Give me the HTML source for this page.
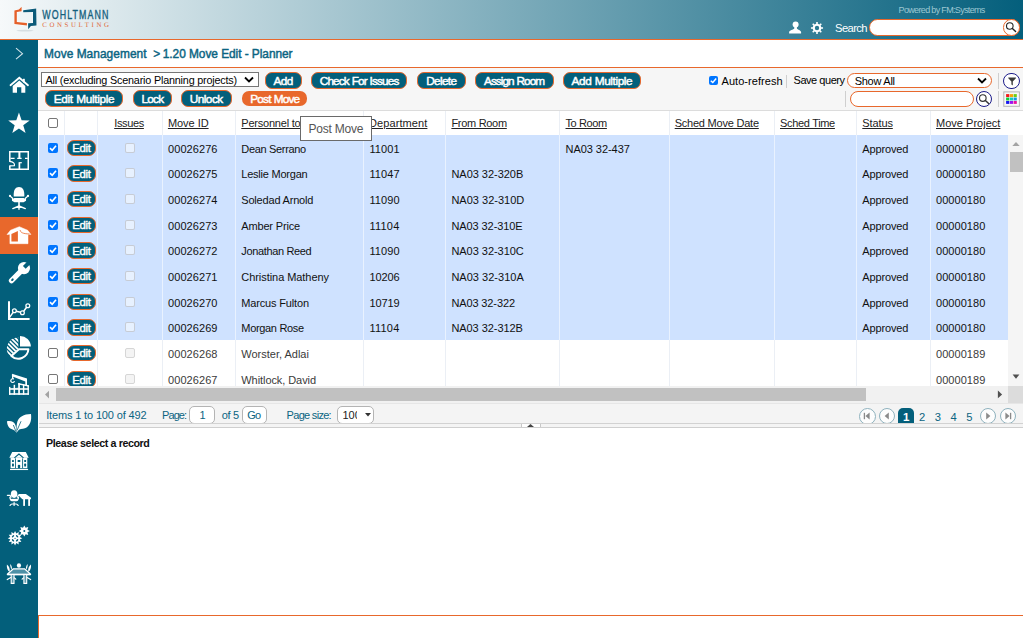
<!DOCTYPE html>
<html lang="en">
<head>
<meta charset="utf-8">
<title>1.20 Move Edit - Planner</title>
<style>
*{box-sizing:border-box;}
html,body{margin:0;padding:0;}
body{width:1023px;height:638px;overflow:hidden;background:#fff;font-family:"Liberation Sans",sans-serif;font-size:11px;color:#222;position:relative;}
div,span{position:absolute;}
.t{white-space:nowrap;line-height:14px;height:14px;}
#hdr{left:0;top:0;width:1023px;height:39px;background:linear-gradient(90deg,#f6f9fa 0%,#045f7c 100%);}
#hdrline{left:0;top:38.7px;width:1023px;height:1.4px;background:#e8682c;}
#side{left:0;top:40px;width:38px;height:598px;background:#035f7b;}
#side .act{left:0;top:177px;width:38px;height:37px;background:#e8682c;}
#side svg{position:absolute;left:0;}
#crumb{left:44px;top:47px;font-weight:bold;font-size:12.4px;color:#0b6482;white-space:pre;letter-spacing:-0.4px;}
#crumbline{left:38px;top:67.1px;width:985px;height:1.1px;background:#e8682c;}
#tool{left:38px;top:68px;width:985px;height:42.7px;background:#f6f6f6;border-bottom:1px solid #dcdcdc;}
.btn{height:16.5px;border:1.5px solid #e8682c;border-radius:7px;background:#035f7b;color:#fff;font-weight:bold;font-size:11px;line-height:13px;text-align:center;white-space:nowrap;overflow:hidden;}
.btn.or{background:#e8682c;}
.cb{width:10px;height:10px;border:1px solid #767676;border-radius:2px;background:#fff;}
.cb.on{border:none;background:#0075ff;}
.cb.dis{border-color:rgba(150,150,150,.4);background:rgba(255,255,255,.5);}
.cb.dis2{border-color:#d6d6d6;background:#f4f4f4;}
.cb.on svg{position:absolute;left:0;top:0;}
.row{left:41px;width:967px;height:25.65px;}
.row.sel{background:#cfe2ff;}
.vl{width:1px;background:#ebeff5;}
.hd{text-decoration:underline;color:#222;}
.pill{border:1px solid #e8682c;border-radius:8px;background:#fff;}
.sep{width:1px;background:#cfcfcf;}
</style>
</head>
<body>
<div id="hdr"></div><div id="hdrline"></div>
<svg style="position:absolute;left:0;top:0" width="120" height="39" viewBox="0 0 120 39"><ellipse cx="25" cy="30.6" rx="8.6" ry="0.8" fill="#cfd8dc" opacity="0.8"/><path d="M21.6 6.8 L18.9 9.5 L14.4 10.5 L14.4 24.1 L26.9 25.5 L26.9 23 L16.8 22 L16.8 12.1 L21.6 11.3 Z" fill="#e4602a" stroke="#fff" stroke-width="0.8" stroke-linejoin="round" paint-order="stroke"/><path d="M23.2 10.3 L36.2 8.4 L36.5 25.4 L30.9 26 L28.2 29.2 L28.1 23.3 L33 23 L33 11.9 L23.2 12.2 Z" fill="#0d5b79" stroke="#fff" stroke-width="0.8" stroke-linejoin="round" paint-order="stroke"/><text transform="translate(42.2 19.45) scale(0.72 1)" font-family="Liberation Sans, sans-serif" font-size="12.3" fill="#14607d" stroke="#14607d" stroke-width="0.35" textLength="92" lengthAdjust="spacing">WOHLTMANN</text><text x="42.2" y="26.75" font-family="Liberation Serif, serif" font-size="6.9" text-rendering="geometricPrecision" fill="#e0693a" textLength="66.8" lengthAdjust="spacing">CONSULTING</text></svg>
<svg style="position:absolute;left:780px;top:14px" width="60" height="25" viewBox="780 14 60 25"><circle cx="795.6" cy="24.4" r="3" fill="#fff"/><path d="M794.3 26.5 H796.9 V28.6 C797.6 30 801 30.2 801.1 32.2 V33.5 H789.1 V32.2 C789.2 30.2 793.6 30 794.3 28.6Z" fill="#fff"/><path d="M823.05 27.19 L823.05 28.81 L821.33 28.78 L820.61 30.51 L821.85 31.70 L820.70 32.85 L819.51 31.61 L817.78 32.33 L817.81 34.05 L816.19 34.05 L816.22 32.33 L814.49 31.61 L813.30 32.85 L812.15 31.70 L813.39 30.51 L812.67 28.78 L810.95 28.81 L810.95 27.19 L812.67 27.22 L813.39 25.49 L812.15 24.30 L813.30 23.15 L814.49 24.39 L816.22 23.67 L816.19 21.95 L817.81 21.95 L817.78 23.67 L819.51 24.39 L820.70 23.15 L821.85 24.30 L820.61 25.49 L821.33 27.22Z" fill="#fff"/><circle cx="817" cy="28" r="2.2" fill="#2b7a92"/></svg>
<div id="side"><div class="act"></div><svg style="position:absolute;left:0;top:0" width="38" height="598" viewBox="0 40 38 598"><path d="M16 48.2 L22.5 53.7 L16 59.2" stroke="#d3e4ea" stroke-width="1.1" fill="none"/><path d="M10.5 85.2 L19.3 77.7 L28 85.2" stroke="#fff" stroke-width="1.8" fill="none" stroke-linecap="round" stroke-linejoin="miter"/><rect x="23" y="78.8" width="1.8" height="3.6" fill="#fff"/><path d="M12.7 86 L19.3 80.4 L25.3 86 V92.8 H21.3 V87.2 H17 V92.8 H12.7Z" fill="#fff"/><polygon points="18.95,112.60 21.60,120.26 29.70,120.41 23.23,125.29 25.59,133.04 18.95,128.40 12.31,133.04 14.67,125.29 8.20,120.41 16.30,120.26" fill="#fff"/><path d="M9.8 161.7 V151.75 H28.25 V169.15 H9.8 V165.8" fill="none" stroke="#fff" stroke-width="1.5"/><path d="M9.4 161.4 C13.6 161.8 14.9 163.6 14.4 165.7 L9.4 165.9" fill="none" stroke="#fff" stroke-width="1.2"/><path d="M19.4 151.7 V158.8" stroke="#fff" stroke-width="2" fill="none"/><path d="M10.5 158.4 H14.6 M17.2 158.4 H21.6 M25 158.4 H27.8" stroke="#fff" stroke-width="1.4" fill="none"/><path d="M19.4 162.2 V169.2" stroke="#fff" stroke-width="1.7" fill="none"/><path d="M19.4 162.7 H21.8" stroke="#fff" stroke-width="1.2" fill="none"/><path d="M13.7 196.6 C13.3 189.6 15.5 187 19 187 C22.5 187 24.7 189.6 24.3 196.6 Z" fill="#fff"/><path d="M10 196 L12.6 198.2 V200.6 M28 196 L25.4 198.2 V200.6" stroke="#fff" stroke-width="1.3" fill="none" stroke-linecap="round"/><circle cx="10" cy="195.9" r="1.1" fill="#fff"/><circle cx="28" cy="195.9" r="1.1" fill="#fff"/><rect x="12.9" y="198" width="12.2" height="4.2" rx="1.6" fill="#fff"/><rect x="18.2" y="202" width="1.6" height="4.4" fill="#fff"/><path d="M19 206 L12.8 208.6 M19 206 L25.3 208.6 M19 206 V209.2" stroke="#fff" stroke-width="1.4" fill="none" stroke-linecap="round"/><path d="M7 234.6 L10.5 230.2 L19.3 226.7 L27.7 230.3 L30.9 234.4 L28 234.6 V243.7 H9.9 V234.3Z" fill="#fff" stroke="#fff" stroke-width="0.5" stroke-linejoin="round"/><path d="M11.4 234 L17.9 231 V241.6 H11.4Z" fill="#e8682c"/><path d="M20.1 230 C20.6 232.6 22.6 233.7 29.6 234" fill="none" stroke="#e8682c" stroke-width="0.8"/><path d="M11.5 280.7 L21.5 270.7" stroke="#fff" stroke-width="5.3" stroke-linecap="round"/><circle cx="24" cy="268.1" r="6.1" fill="#fff"/><path d="M22.9 265.9 L28.6 260.2 L31.4 263 L25.7 268.7 Z" fill="#035f7b"/><ellipse cx="12.4" cy="279.7" rx="1.5" ry="1" transform="rotate(-45 12.4 279.7)" fill="#035f7b"/><path d="M9 301.2 V319 H29.6" stroke="#fff" stroke-width="2" fill="none"/><path d="M9.4 317.6 L13.1 312.4 M16.2 311.3 L20.6 312.3 M23.7 311.2 L26.6 307.3" stroke="#fff" stroke-width="1.5" fill="none"/><circle cx="14.4" cy="310.8" r="1.9" fill="none" stroke="#fff" stroke-width="1.3"/><circle cx="22.4" cy="312.7" r="1.9" fill="none" stroke="#fff" stroke-width="1.3"/><circle cx="27.8" cy="305.8" r="1.9" fill="none" stroke="#fff" stroke-width="1.3"/><defs><clipPath id="pieL"><path d="M18.3 348.4 L18.3 337.5 A11 11 0 0 0 10.3 356.4 Z"/></clipPath></defs><g clip-path="url(#pieL)" stroke="#fff" stroke-width="1.75"><path d="M-18.5 330 L21.5 370"/><path d="M-14.2 330 L25.8 370"/><path d="M-9.9 330 L30.1 370"/><path d="M-5.6 330 L34.4 370"/><path d="M-1.3 330 L38.7 370"/><path d="M3 330 L43 370"/><path d="M7.3 330 L47.3 370"/><path d="M11.6 330 L51.6 370"/><path d="M15.9 330 L55.9 370"/></g><path d="M18.9 349.3 H28.4 A10.1 10.1 0 0 1 11.4 355.9 Z" fill="none" stroke="#fff" stroke-width="2" stroke-linejoin="round"/><path d="M20 346.6 V336 A10.8 10.8 0 0 1 30.9 346.6 Z" fill="#fff"/><rect x="9" y="388.2" width="19.9" height="1.6" fill="#fff"/><rect x="9" y="393.2" width="19.9" height="1.6" fill="#fff"/><rect x="9" y="386.9" width="1.4" height="7.8" fill="#fff"/><rect x="13.6" y="384.8" width="1.5" height="9.9" fill="#fff"/><rect x="18.2" y="383.2" width="1.7" height="11.5" fill="#fff"/><rect x="22.9" y="384.4" width="1.4" height="10.3" fill="#fff"/><rect x="27.5" y="385.4" width="1.4" height="9.3" fill="#fff"/><path d="M18.2 383.1 L28.9 385.3 V386.7 L18.2 384.6Z" fill="#fff"/><path d="M9 389 L18.5 387.6 V389Z" fill="#fff" opacity="0.55"/><path d="M12 373.7 L27 378.5 V385.3 L25.3 385 V381.4 L12.6 376.5Z" fill="#fff"/><path d="M12.5 374.4 L12.8 379" stroke="#fff" stroke-width="1.3" fill="none"/><path d="M13.4 378.8 C10.4 378.4 9.8 382.2 12.6 382.5 C13.6 382.5 14.1 382 14.3 381.5" stroke="#fff" stroke-width="1.2" fill="none" stroke-linecap="round"/><path d="M16.5 432.7 C16.5 428 16.5 424.2 17.4 421.6 C18.8 417.2 23.6 414.2 31 414.1 C31.7 420 30.6 424.6 27 427.2 C24.4 429 21.4 428.8 19.3 429.4 C18.2 430.2 17.4 431.6 16.5 432.7Z" fill="#fff"/><path d="M16.4 432.6 C15.2 430.8 14 429.8 12.6 429.4 C9.3 428.7 7.1 425.7 7 421.3 C11.2 420.5 14.3 422 15.5 425.2 C16.1 427 16.3 429.8 16.4 432.6Z" fill="#fff"/><path d="M16 431.4 L13.5 425.4 M17.1 430.2 L20.9 421.6" stroke="#035f7b" stroke-width="0.8" fill="none" stroke-linecap="round"/><path d="M9.3 457.7 L12.2 452 H25.8 L28.7 457.7Z" fill="#fff"/><rect x="10.6" y="457.6" width="16.7" height="10.6" fill="#fff"/><rect x="10" y="468.9" width="18.1" height="1.15" fill="#fff"/><path d="M14.4 457.9 L18.95 454 L23.5 457.9" fill="none" stroke="#035f7b" stroke-width="1.1"/><rect x="12" y="459.9" width="1.9" height="2.1" rx="0.5" fill="#035f7b"/><rect x="12" y="463.6" width="1.9" height="2.9" rx="0.6" fill="#035f7b"/><rect x="24.2" y="459.9" width="1.9" height="2.1" rx="0.5" fill="#035f7b"/><rect x="24.2" y="463.6" width="1.9" height="2.9" rx="0.6" fill="#035f7b"/><rect x="15.1" y="458.4" width="0.85" height="9.8" rx="0" fill="#035f7b"/><rect x="22.2" y="458.4" width="0.85" height="9.8" rx="0" fill="#035f7b"/><rect x="17.6" y="459.9" width="2.7" height="2.1" rx="0.5" fill="#035f7b"/><rect x="17.8" y="464.7" width="2.4" height="3.6" rx="1" fill="#035f7b"/><ellipse cx="14.1" cy="494.1" rx="3.3" ry="3.8" fill="#fff"/><path d="M9.9 497.4 C10.2 499.6 10.8 500.6 12 500.7 H16.4 C17.6 500.6 18.2 499.6 18.5 497.4" fill="none" stroke="#fff" stroke-width="1.3" stroke-linecap="round"/><rect x="11" y="498.8" width="6.4" height="1.9" fill="#fff"/><path d="M7.4 495.3 H10 L11 497.2 M20.6 495.3 H18.4 L17.4 497.2" stroke="#fff" stroke-width="1.3" fill="none" stroke-linecap="round"/><path d="M10 505.4 C11 503.2 17.2 503.2 18.2 505.4 M14.1 502.6 V505.4" stroke="#fff" stroke-width="1.2" fill="none" stroke-linecap="round"/><path d="M18.6 494 H25.9 L31 497.8 V499.2 H22.4 L18.6 495.6Z" fill="#fff"/><rect x="23.2" y="499" width="1.8" height="6.9" fill="#fff"/><rect x="28.2" y="499" width="1.8" height="6.9" fill="#fff"/><polygon points="15.05,545.60 13.78,543.03 11.40,544.62 11.59,541.76 8.73,541.95 10.32,539.57 7.75,538.30 10.32,537.03 8.73,534.65 11.59,534.84 11.40,531.98 13.78,533.57 15.05,531.00 16.32,533.57 18.70,531.98 18.51,534.84 21.37,534.65 19.78,537.03 22.35,538.30 19.78,539.57 21.37,541.95 18.51,541.76 18.70,544.62 16.32,543.03" fill="#fff"/><ellipse cx="17.10" cy="540.35" rx="1.5" ry="0.75" transform="rotate(135 17.10 540.35)" fill="#035f7b"/><ellipse cx="13.00" cy="540.35" rx="1.5" ry="0.75" transform="rotate(225 13.00 540.35)" fill="#035f7b"/><ellipse cx="13.00" cy="536.25" rx="1.5" ry="0.75" transform="rotate(315 13.00 536.25)" fill="#035f7b"/><ellipse cx="17.10" cy="536.25" rx="1.5" ry="0.75" transform="rotate(405 17.10 536.25)" fill="#035f7b"/><circle cx="15.05" cy="538.3" r="0.6" fill="#035f7b"/><polygon points="24.30,536.60 23.00,534.14 20.34,534.96 21.16,532.30 18.70,531.00 21.16,529.70 20.34,527.04 23.00,527.86 24.30,525.40 25.60,527.86 28.26,527.04 27.44,529.70 29.90,531.00 27.44,532.30 28.26,534.96 25.60,534.14" fill="#fff"/><circle cx="24.3" cy="531" r="1" fill="#035f7b"/><ellipse cx="18.95" cy="565.5" rx="2.1" ry="2.35" fill="#fff"/><path d="M13.4 568.8 H24.5 L30.6 574.3 H7.3Z" fill="#4d90a6" stroke="#fff" stroke-width="1.2" stroke-linejoin="round"/><path d="M7.3 574.6 H30.6" stroke="#fff" stroke-width="1.5"/><g><path d="M6.9 564.4 C6.6 567.8 7.6 570.4 9.6 571.8 C10.2 569 9.2 566.2 6.9 564.4Z" fill="#fff"/><path d="M10.2 564 C10.2 566.4 10.6 568.2 11.7 569.6 C12.3 567.6 11.8 565.6 10.2 564Z" fill="#fff"/><path d="M11.2 575 V583.4 H14 V575" fill="#5a99ad" stroke="#fff" stroke-width="1.1"/><path d="M7.3 579.6 L10.8 577.6 M14.4 577.8 L15.8 579.2" stroke="#fff" stroke-width="1.2" fill="none" stroke-linecap="round"/></g><g transform="translate(37.9 0) scale(-1 1)"><path d="M6.9 564.4 C6.6 567.8 7.6 570.4 9.6 571.8 C10.2 569 9.2 566.2 6.9 564.4Z" fill="#fff"/><path d="M10.2 564 C10.2 566.4 10.6 568.2 11.7 569.6 C12.3 567.6 11.8 565.6 10.2 564Z" fill="#fff"/><path d="M11.2 575 V583.4 H14 V575" fill="#5a99ad" stroke="#fff" stroke-width="1.1"/><path d="M7.3 579.6 L10.8 577.6 M14.4 577.8 L15.8 579.2" stroke="#fff" stroke-width="1.2" fill="none" stroke-linecap="round"/></g></svg></div>
<div id="crumbline"></div>
<span id="t1" class="t " style="left:44px;top:47.2px;letter-spacing:0.054px;color:#0b6482;font-size:11.9px;-webkit-text-stroke:0.45px #0b6482;">Move Management</span>
<span id="t2" class="t " style="left:153.2px;top:47.2px;letter-spacing:-1.453px;color:#0b6482;font-size:11.9px;-webkit-text-stroke:0.45px #0b6482;">&gt;</span>
<span id="t3" class="t " style="left:162.8px;top:47.2px;letter-spacing:-0.049px;color:#0b6482;font-size:11.9px;-webkit-text-stroke:0.45px #0b6482;">1.20 Move Edit - Planner</span>
<div id="tool"></div>
<div class="btn" style="left:265.2px;top:72.1px;width:36.8px;"></div>
<span id="t4" class="t " style="left:273.4px;top:73.8px;word-spacing:0.5px;letter-spacing:-0.533px;color:#fff;font-size:11.8px;-webkit-text-stroke:0.45px #fff;">Add</span>
<div class="btn" style="left:310.8px;top:72.1px;width:96.2px;"></div>
<span id="t5" class="t " style="left:319.8px;top:73.8px;word-spacing:0.5px;letter-spacing:-0.887px;color:#fff;font-size:11.8px;-webkit-text-stroke:0.45px #fff;">Check For Issues</span>
<div class="btn" style="left:417px;top:72.1px;width:49px;"></div>
<span id="t6" class="t " style="left:426.2px;top:73.8px;word-spacing:0.5px;letter-spacing:-0.668px;color:#fff;font-size:11.8px;-webkit-text-stroke:0.45px #fff;">Delete</span>
<div class="btn" style="left:475px;top:72.1px;width:78.5px;"></div>
<span id="t7" class="t " style="left:484px;top:73.8px;word-spacing:0.5px;letter-spacing:-0.951px;color:#fff;font-size:11.8px;-webkit-text-stroke:0.45px #fff;">Assign Room</span>
<div class="btn" style="left:563px;top:72.1px;width:78.2px;"></div>
<span id="t8" class="t " style="left:571.6px;top:73.8px;word-spacing:0.5px;letter-spacing:-0.402px;color:#fff;font-size:11.8px;-webkit-text-stroke:0.45px #fff;">Add Multiple</span>
<div class="btn" style="left:45px;top:90.1px;width:77.6px;"></div>
<span id="t9" class="t " style="left:53.8px;top:92.3px;word-spacing:0.5px;letter-spacing:-0.328px;color:#fff;font-size:11.8px;-webkit-text-stroke:0.45px #fff;">Edit Multiple</span>
<div class="btn" style="left:133.2px;top:90.1px;width:38.6px;"></div>
<span id="t10" class="t " style="left:141.4px;top:92.3px;word-spacing:0.5px;letter-spacing:-0.755px;color:#fff;font-size:11.8px;-webkit-text-stroke:0.45px #fff;">Lock</span>
<div class="btn" style="left:181px;top:90.1px;width:50.6px;"></div>
<span id="t11" class="t " style="left:189.7px;top:92.3px;word-spacing:0.5px;letter-spacing:-0.510px;color:#fff;font-size:11.8px;-webkit-text-stroke:0.45px #fff;">Unlock</span>
<div class="btn or" style="left:242px;top:91.1px;width:65.2px;height:14.8px;border:none;border-radius:7px;"></div>
<span id="t12" class="t " style="left:250.2px;top:92.3px;word-spacing:0.5px;letter-spacing:-0.782px;color:#fff;font-size:11.8px;-webkit-text-stroke:0.45px #fff;">Post Move</span>
<div style="left:41px;top:72.2px;width:217.8px;height:14.7px;border:1px solid #767676;background:#fff;"></div>
<span id="t13" class="t " style="left:45.6px;top:73.3px;letter-spacing:-0.187px;color:#000;font-size:10.8px;">All (excluding Scenario Planning projects)</span>
<svg style="position:absolute;left:244px;top:76px" width="10" height="8" viewBox="0 0 10 8"><path d="M1 1.5 L5 5.5 L9 1.5" fill="none" stroke="#000" stroke-width="1.8"/></svg>
<div class="cb on" style="left:709px;top:76px;width:9px;height:9px;"><svg width="9" height="9" viewBox="0 0 10 10"><path d="M2 5.2 L4.2 7.3 L8 2.8" fill="none" stroke="#fff" stroke-width="1.6"/></svg></div>
<span id="t14" class="t " style="left:721.5px;top:73.5px;letter-spacing:0.056px;color:#000;">Auto-refresh</span>
<div class="sep" style="left:786px;top:75px;height:13px;"></div>
<span id="t15" class="t " style="left:793.5px;top:73px;letter-spacing:-0.456px;color:#000;">Save query</span>
<div class="pill" style="left:847px;top:73px;width:145px;height:14.9px;"></div>
<span id="t16" class="t " style="left:854.7px;top:73.5px;letter-spacing:-0.263px;color:#000;">Show All</span>
<svg style="position:absolute;left:977px;top:76.6px" width="10" height="8" viewBox="0 0 10 8"><path d="M1 1.5 L5 5.5 L9 1.5" fill="none" stroke="#000" stroke-width="1.8"/></svg>
<div class="sep" style="left:845px;top:91px;height:16px;"></div>
<div class="pill" style="left:849.5px;top:91px;width:124.5px;height:15.5px;"></div>
<div class="sep" style="left:998px;top:73px;height:15.5px;"></div>
<div class="sep" style="left:998px;top:91.4px;height:15.2px;"></div>
<div style="left:38px;top:110.5px;width:985px;height:24.5px;background:#fff;"></div>
<div style="left:39px;top:135px;width:969px;height:205px;background:#cfe2ff;"></div>
<div class="vl" style="left:63.6px;top:111px;height:24px;"></div>
<div class="vl" style="left:63.6px;top:135px;height:251.5px;background:rgba(255,255,255,.55);"></div>
<div class="vl" style="left:63.6px;top:340.4px;height:46px;background:#ebeff5;"></div>
<div class="vl" style="left:96.6px;top:111px;height:24px;"></div>
<div class="vl" style="left:96.6px;top:135px;height:251.5px;background:rgba(255,255,255,.55);"></div>
<div class="vl" style="left:96.6px;top:340.4px;height:46px;background:#ebeff5;"></div>
<div class="vl" style="left:161.6px;top:111px;height:24px;"></div>
<div class="vl" style="left:161.6px;top:135px;height:251.5px;background:rgba(255,255,255,.55);"></div>
<div class="vl" style="left:161.6px;top:340.4px;height:46px;background:#ebeff5;"></div>
<div class="vl" style="left:234.6px;top:111px;height:24px;"></div>
<div class="vl" style="left:234.6px;top:135px;height:251.5px;background:rgba(255,255,255,.55);"></div>
<div class="vl" style="left:234.6px;top:340.4px;height:46px;background:#ebeff5;"></div>
<div class="vl" style="left:362.5px;top:111px;height:24px;"></div>
<div class="vl" style="left:362.5px;top:135px;height:251.5px;background:rgba(255,255,255,.55);"></div>
<div class="vl" style="left:362.5px;top:340.4px;height:46px;background:#ebeff5;"></div>
<div class="vl" style="left:445px;top:111px;height:24px;"></div>
<div class="vl" style="left:445px;top:135px;height:251.5px;background:rgba(255,255,255,.55);"></div>
<div class="vl" style="left:445px;top:340.4px;height:46px;background:#ebeff5;"></div>
<div class="vl" style="left:558.9px;top:111px;height:24px;"></div>
<div class="vl" style="left:558.9px;top:135px;height:251.5px;background:rgba(255,255,255,.55);"></div>
<div class="vl" style="left:558.9px;top:340.4px;height:46px;background:#ebeff5;"></div>
<div class="vl" style="left:668.7px;top:111px;height:24px;"></div>
<div class="vl" style="left:668.7px;top:135px;height:251.5px;background:rgba(255,255,255,.55);"></div>
<div class="vl" style="left:668.7px;top:340.4px;height:46px;background:#ebeff5;"></div>
<div class="vl" style="left:774px;top:111px;height:24px;"></div>
<div class="vl" style="left:774px;top:135px;height:251.5px;background:rgba(255,255,255,.55);"></div>
<div class="vl" style="left:774px;top:340.4px;height:46px;background:#ebeff5;"></div>
<div class="vl" style="left:856px;top:111px;height:24px;"></div>
<div class="vl" style="left:856px;top:135px;height:251.5px;background:rgba(255,255,255,.55);"></div>
<div class="vl" style="left:856px;top:340.4px;height:46px;background:#ebeff5;"></div>
<div class="vl" style="left:930px;top:111px;height:24px;"></div>
<div class="vl" style="left:930px;top:135px;height:251.5px;background:rgba(255,255,255,.55);"></div>
<div class="vl" style="left:930px;top:340.4px;height:46px;background:#ebeff5;"></div>
<div class="cb" style="left:48px;top:117.5px;"></div>
<span id="t17" class="t hd" style="left:114.2px;top:116.2px;letter-spacing:-0.349px;">Issues</span>
<span id="t18" class="t hd" style="left:167.9px;top:116.2px;letter-spacing:-0.038px;">Move ID</span>
<span id="t19" class="t hd" style="left:241.3px;top:116.2px;letter-spacing:-0.219px;">Personnel to Move</span>
<span id="t20" class="t hd" style="left:369px;top:116.2px;letter-spacing:0.092px;">Department</span>
<span id="t21" class="t hd" style="left:451.4px;top:116.2px;letter-spacing:-0.296px;">From Room</span>
<span id="t22" class="t hd" style="left:565.5px;top:116.2px;letter-spacing:-0.376px;">To Room</span>
<span id="t23" class="t hd" style="left:674.7px;top:116.2px;letter-spacing:-0.223px;">Sched Move Date</span>
<span id="t24" class="t hd" style="left:780px;top:116.2px;letter-spacing:-0.319px;">Sched Time</span>
<span id="t25" class="t hd" style="left:862.3px;top:116.2px;letter-spacing:-0.115px;">Status</span>
<span id="t26" class="t hd" style="left:936px;top:116.2px;letter-spacing:0.016px;">Move Project</span>
<div style="left:0;top:135px;width:1008px;height:252px;overflow:hidden;">
<div class="cb on" style="left:48px;top:7.6px;"><svg width="10" height="10" viewBox="0 0 10 10"><path d="M2 5.2 L4.2 7.3 L8 2.8" fill="none" stroke="#fff" stroke-width="1.6"/></svg></div>
<div class="btn" style="left:67px;top:4.6px;width:28.5px;height:16.5px;"></div>
<span id="t27" class="t " style="left:72.2px;top:6.1px;letter-spacing:-0.260px;color:#fff;font-size:11.4px;-webkit-text-stroke:0.4px #fff;">Edit</span>
<div class="cb dis" style="left:125px;top:7.6px;"></div>
<span id="t28" class="t " style="left:168.1px;top:6.6px;letter-spacing:0.056px;color:#111;">00026276</span>
<span id="t29" class="t " style="left:241.3px;top:6.6px;letter-spacing:-0.325px;color:#111;">Dean Serrano</span>
<span id="t30" class="t " style="left:369.4px;top:6.6px;letter-spacing:0.084px;color:#111;">11001</span>
<span id="t31" class="t " style="left:565.5px;top:6.6px;letter-spacing:-0.048px;color:#111;">NA03 32-437</span>
<span id="t32" class="t " style="left:862.3px;top:6.6px;letter-spacing:-0.137px;color:#111;">Approved</span>
<span id="t33" class="t " style="left:936px;top:6.6px;letter-spacing:0.056px;color:#111;">00000180</span>
<div class="cb on" style="left:48px;top:33.25px;"><svg width="10" height="10" viewBox="0 0 10 10"><path d="M2 5.2 L4.2 7.3 L8 2.8" fill="none" stroke="#fff" stroke-width="1.6"/></svg></div>
<div class="btn" style="left:67px;top:30.25px;width:28.5px;height:16.5px;"></div>
<span id="t34" class="t " style="left:72.2px;top:31.75px;letter-spacing:-0.260px;color:#fff;font-size:11.4px;-webkit-text-stroke:0.4px #fff;">Edit</span>
<div class="cb dis" style="left:125px;top:33.25px;"></div>
<span id="t35" class="t " style="left:168.1px;top:32.25px;letter-spacing:0.056px;color:#111;">00026275</span>
<span id="t36" class="t " style="left:241.3px;top:32.25px;letter-spacing:-0.230px;color:#111;">Leslie Morgan</span>
<span id="t37" class="t " style="left:369.4px;top:32.25px;letter-spacing:0.084px;color:#111;">11047</span>
<span id="t38" class="t " style="left:451.4px;top:32.25px;letter-spacing:-0.023px;color:#111;">NA03 32-320B</span>
<span id="t39" class="t " style="left:862.3px;top:32.25px;letter-spacing:-0.137px;color:#111;">Approved</span>
<span id="t40" class="t " style="left:936px;top:32.25px;letter-spacing:0.056px;color:#111;">00000180</span>
<div class="cb on" style="left:48px;top:58.9px;"><svg width="10" height="10" viewBox="0 0 10 10"><path d="M2 5.2 L4.2 7.3 L8 2.8" fill="none" stroke="#fff" stroke-width="1.6"/></svg></div>
<div class="btn" style="left:67px;top:55.9px;width:28.5px;height:16.5px;"></div>
<span id="t41" class="t " style="left:72.2px;top:57.4px;letter-spacing:-0.260px;color:#fff;font-size:11.4px;-webkit-text-stroke:0.4px #fff;">Edit</span>
<div class="cb dis" style="left:125px;top:58.9px;"></div>
<span id="t42" class="t " style="left:168.1px;top:57.9px;letter-spacing:0.056px;color:#111;">00026274</span>
<span id="t43" class="t " style="left:241.3px;top:57.9px;letter-spacing:-0.195px;color:#111;">Soledad Arnold</span>
<span id="t44" class="t " style="left:369.4px;top:57.9px;letter-spacing:0.084px;color:#111;">11090</span>
<span id="t45" class="t " style="left:451.4px;top:57.9px;letter-spacing:0.010px;color:#111;">NA03 32-310D</span>
<span id="t46" class="t " style="left:862.3px;top:57.9px;letter-spacing:-0.137px;color:#111;">Approved</span>
<span id="t47" class="t " style="left:936px;top:57.9px;letter-spacing:0.056px;color:#111;">00000180</span>
<div class="cb on" style="left:48px;top:84.55px;"><svg width="10" height="10" viewBox="0 0 10 10"><path d="M2 5.2 L4.2 7.3 L8 2.8" fill="none" stroke="#fff" stroke-width="1.6"/></svg></div>
<div class="btn" style="left:67px;top:81.55px;width:28.5px;height:16.5px;"></div>
<span id="t48" class="t " style="left:72.2px;top:83.05px;letter-spacing:-0.260px;color:#fff;font-size:11.4px;-webkit-text-stroke:0.4px #fff;">Edit</span>
<div class="cb dis" style="left:125px;top:84.55px;"></div>
<span id="t49" class="t " style="left:168.1px;top:83.55px;letter-spacing:0.056px;color:#111;">00026273</span>
<span id="t50" class="t " style="left:241.3px;top:83.55px;letter-spacing:-0.166px;color:#111;">Amber Price</span>
<span id="t51" class="t " style="left:369.4px;top:83.55px;letter-spacing:0.246px;color:#111;">11104</span>
<span id="t52" class="t " style="left:451.4px;top:83.55px;letter-spacing:-0.081px;color:#111;">NA03 32-310E</span>
<span id="t53" class="t " style="left:862.3px;top:83.55px;letter-spacing:-0.137px;color:#111;">Approved</span>
<span id="t54" class="t " style="left:936px;top:83.55px;letter-spacing:0.056px;color:#111;">00000180</span>
<div class="cb on" style="left:48px;top:110.2px;"><svg width="10" height="10" viewBox="0 0 10 10"><path d="M2 5.2 L4.2 7.3 L8 2.8" fill="none" stroke="#fff" stroke-width="1.6"/></svg></div>
<div class="btn" style="left:67px;top:107.2px;width:28.5px;height:16.5px;"></div>
<span id="t55" class="t " style="left:72.2px;top:108.7px;letter-spacing:-0.260px;color:#fff;font-size:11.4px;-webkit-text-stroke:0.4px #fff;">Edit</span>
<div class="cb dis" style="left:125px;top:110.2px;"></div>
<span id="t56" class="t " style="left:168.1px;top:109.2px;letter-spacing:0.056px;color:#111;">00026272</span>
<span id="t57" class="t " style="left:241.3px;top:109.2px;letter-spacing:-0.348px;color:#111;">Jonathan Reed</span>
<span id="t58" class="t " style="left:369.4px;top:109.2px;letter-spacing:0.084px;color:#111;">11090</span>
<span id="t59" class="t " style="left:451.4px;top:109.2px;letter-spacing:-0.032px;color:#111;">NA03 32-310C</span>
<span id="t60" class="t " style="left:862.3px;top:109.2px;letter-spacing:-0.137px;color:#111;">Approved</span>
<span id="t61" class="t " style="left:936px;top:109.2px;letter-spacing:0.056px;color:#111;">00000180</span>
<div class="cb on" style="left:48px;top:135.85px;"><svg width="10" height="10" viewBox="0 0 10 10"><path d="M2 5.2 L4.2 7.3 L8 2.8" fill="none" stroke="#fff" stroke-width="1.6"/></svg></div>
<div class="btn" style="left:67px;top:132.85px;width:28.5px;height:16.5px;"></div>
<span id="t62" class="t " style="left:72.2px;top:134.35px;letter-spacing:-0.260px;color:#fff;font-size:11.4px;-webkit-text-stroke:0.4px #fff;">Edit</span>
<div class="cb dis" style="left:125px;top:135.85px;"></div>
<span id="t63" class="t " style="left:168.1px;top:134.85px;letter-spacing:0.056px;color:#111;">00026271</span>
<span id="t64" class="t " style="left:241.3px;top:134.85px;letter-spacing:-0.056px;color:#111;">Christina Matheny</span>
<span id="t65" class="t " style="left:369.4px;top:134.85px;letter-spacing:-0.079px;color:#111;">10206</span>
<span id="t66" class="t " style="left:451.4px;top:134.85px;letter-spacing:0.019px;color:#111;">NA03 32-310A</span>
<span id="t67" class="t " style="left:862.3px;top:134.85px;letter-spacing:-0.137px;color:#111;">Approved</span>
<span id="t68" class="t " style="left:936px;top:134.85px;letter-spacing:0.056px;color:#111;">00000180</span>
<div class="cb on" style="left:48px;top:161.5px;"><svg width="10" height="10" viewBox="0 0 10 10"><path d="M2 5.2 L4.2 7.3 L8 2.8" fill="none" stroke="#fff" stroke-width="1.6"/></svg></div>
<div class="btn" style="left:67px;top:158.5px;width:28.5px;height:16.5px;"></div>
<span id="t69" class="t " style="left:72.2px;top:160px;letter-spacing:-0.260px;color:#fff;font-size:11.4px;-webkit-text-stroke:0.4px #fff;">Edit</span>
<div class="cb dis" style="left:125px;top:161.5px;"></div>
<span id="t70" class="t " style="left:168.1px;top:160.5px;letter-spacing:0.056px;color:#111;">00026270</span>
<span id="t71" class="t " style="left:241.3px;top:160.5px;letter-spacing:-0.162px;color:#111;">Marcus Fulton</span>
<span id="t72" class="t " style="left:369.4px;top:160.5px;letter-spacing:-0.079px;color:#111;">10719</span>
<span id="t73" class="t " style="left:451.4px;top:160.5px;letter-spacing:-0.121px;color:#111;">NA03 32-322</span>
<span id="t74" class="t " style="left:862.3px;top:160.5px;letter-spacing:-0.137px;color:#111;">Approved</span>
<span id="t75" class="t " style="left:936px;top:160.5px;letter-spacing:0.056px;color:#111;">00000180</span>
<div class="cb on" style="left:48px;top:187.15px;"><svg width="10" height="10" viewBox="0 0 10 10"><path d="M2 5.2 L4.2 7.3 L8 2.8" fill="none" stroke="#fff" stroke-width="1.6"/></svg></div>
<div class="btn" style="left:67px;top:184.15px;width:28.5px;height:16.5px;"></div>
<span id="t76" class="t " style="left:72.2px;top:185.65px;letter-spacing:-0.260px;color:#fff;font-size:11.4px;-webkit-text-stroke:0.4px #fff;">Edit</span>
<div class="cb dis" style="left:125px;top:187.15px;"></div>
<span id="t77" class="t " style="left:168.1px;top:186.15px;letter-spacing:0.056px;color:#111;">00026269</span>
<span id="t78" class="t " style="left:241.3px;top:186.15px;letter-spacing:-0.322px;color:#111;">Morgan Rose</span>
<span id="t79" class="t " style="left:369.4px;top:186.15px;letter-spacing:0.246px;color:#111;">11104</span>
<span id="t80" class="t " style="left:451.4px;top:186.15px;letter-spacing:-0.056px;color:#111;">NA03 32-312B</span>
<span id="t81" class="t " style="left:862.3px;top:186.15px;letter-spacing:-0.137px;color:#111;">Approved</span>
<span id="t82" class="t " style="left:936px;top:186.15px;letter-spacing:0.056px;color:#111;">00000180</span>
<div class="cb " style="left:48px;top:212.8px;"></div>
<div class="btn" style="left:67px;top:209.8px;width:28.5px;height:16.5px;"></div>
<span id="t83" class="t " style="left:72.2px;top:211.3px;letter-spacing:-0.260px;color:#fff;font-size:11.4px;-webkit-text-stroke:0.4px #fff;">Edit</span>
<div class="cb dis2" style="left:125px;top:212.8px;"></div>
<span id="t84" class="t " style="left:168.1px;top:211.8px;letter-spacing:0.056px;color:#3a3a3a;">00026268</span>
<span id="t85" class="t " style="left:241.3px;top:211.8px;letter-spacing:-0.005px;color:#3a3a3a;">Worster, Adlai</span>
<span id="t86" class="t " style="left:936px;top:211.8px;letter-spacing:0.056px;color:#3a3a3a;">00000189</span>
<div class="cb " style="left:48px;top:239.15px;"></div>
<div class="btn" style="left:67px;top:236.15px;width:28.5px;height:16.5px;"></div>
<span id="t87" class="t " style="left:72.2px;top:237.65px;letter-spacing:-0.260px;color:#fff;font-size:11.4px;-webkit-text-stroke:0.4px #fff;">Edit</span>
<div class="cb dis2" style="left:125px;top:239.15px;"></div>
<span id="t88" class="t " style="left:168.1px;top:238.15px;letter-spacing:0.056px;color:#3a3a3a;">00026267</span>
<span id="t89" class="t " style="left:241.3px;top:238.15px;letter-spacing:-0.073px;color:#3a3a3a;">Whitlock, David</span>
<span id="t90" class="t " style="left:936px;top:238.15px;letter-spacing:0.056px;color:#3a3a3a;">00000189</span>
</div>
<div style="left:1008px;top:135px;width:15px;height:251.2px;background:#f5f5f5;"></div>
<div style="left:1010px;top:152.2px;width:13px;height:20.3px;background:#c1c1c1;"></div>
<svg style="position:absolute;left:1011px;top:140.5px" width="10" height="6" viewBox="0 0 10 6"><path d="M1.3 5 L5 1 L8.7 5Z" fill="#a3a3a3"/></svg>
<svg style="position:absolute;left:1011px;top:374.3px" width="10" height="6" viewBox="0 0 10 6"><path d="M1.6 0.6 L5 4.8 L8.4 0.6Z" fill="#505050"/></svg>
<div style="left:39px;top:386.2px;width:969px;height:17px;background:#f1f1f1;"></div>
<div style="left:1008px;top:386.2px;width:15px;height:17px;background:#dcdcdc;"></div>
<div style="left:56px;top:388.2px;width:810px;height:12.4px;background:#c1c1c1;"></div>
<svg style="position:absolute;left:44px;top:390px" width="6" height="9" viewBox="0 0 6 9"><path d="M5 0.8 L1 4.6 L5 8.4Z" fill="#a3a3a3"/></svg>
<svg style="position:absolute;left:997px;top:390px" width="6" height="9" viewBox="0 0 6 9"><path d="M0.9 0.6 L5.1 4.4 L0.9 8.2Z" fill="#505050"/></svg>
<div style="left:39px;top:403px;width:984px;height:20.5px;background:#f4f4f4;border-top:1px solid #e6e6e6;"></div>
<span id="t91" class="t " style="left:46.2px;top:408.2px;letter-spacing:-0.150px;color:#0b6482;">Items 1 to 100 of 492</span>
<span id="t92" class="t " style="left:162px;top:408.2px;letter-spacing:-0.910px;color:#0b6482;">Page:</span>
<div style="left:189.3px;top:405.9px;width:25.6px;height:18px;border:1px solid #b4b4b4;border-radius:5px;background:#fff;"></div>
<span id="t93" class="t " style="left:199.6px;top:408.4px;color:#0b6482;">1</span>
<span id="t94" class="t " style="left:221.8px;top:408.2px;letter-spacing:-0.340px;color:#0b6482;">of 5</span>
<div style="left:241.8px;top:405.9px;width:25.6px;height:18px;border:1px solid #b4b4b4;border-radius:5px;background:#fff;"></div>
<span id="t95" class="t " style="left:247.2px;top:408.2px;letter-spacing:-0.744px;color:#0b6482;">Go</span>
<span id="t96" class="t " style="left:286.6px;top:408.2px;letter-spacing:-0.698px;color:#0b6482;">Page size:</span>
<div style="left:336.6px;top:405.9px;width:37px;height:18px;border:1px solid #b4b4b4;border-radius:5px;background:#fff;"></div>
<span id="t97" class="t " style="left:342.5px;top:408.4px;width:14.5px;color:#222;overflow:hidden;">100</span>
<svg style="position:absolute;left:364.6px;top:412.8px" width="6" height="4" viewBox="0 0 6 4"><path d="M0 0 L6 0 L3 3.6Z" fill="#333"/></svg>
<div style="left:859.2px;top:408.2px;width:16.4px;height:16.4px;border:1px solid #8fb2be;border-radius:9px;background:#fdfdfd;"></div>
<svg style="position:absolute;left:859.4px;top:408.4px" width="16" height="16" viewBox="-8 -8 16 16"><path d="M-2.6 -3.2 V3.2" stroke="#8a8a8a" stroke-width="1.3"/><path d="M2.6 -3.4 L-1.6 0 L2.6 3.4Z" fill="#8a8a8a"/></svg>
<div style="left:879px;top:408.2px;width:16px;height:16px;border:1px solid #8fb2be;border-radius:9px;background:#fdfdfd;"></div>
<svg style="position:absolute;left:879px;top:408.2px" width="16" height="16" viewBox="-8 -8 16 16"><path d="M1.8 -3.4 L-2.4 0 L1.8 3.4Z" fill="#8a8a8a"/></svg>
<div style="left:980.3px;top:408.2px;width:15.7px;height:15.7px;border:1px solid #8fb2be;border-radius:9px;background:#fdfdfd;"></div>
<svg style="position:absolute;left:980.15px;top:408.05px" width="16" height="16" viewBox="-8 -8 16 16"><path d="M-1.8 -3.4 L2.4 0 L-1.8 3.4Z" fill="#8a8a8a"/></svg>
<div style="left:999.5px;top:408.2px;width:16.3px;height:16.3px;border:1px solid #8fb2be;border-radius:9px;background:#fdfdfd;"></div>
<svg style="position:absolute;left:999.65px;top:408.35px" width="16" height="16" viewBox="-8 -8 16 16"><path d="M2.6 -3.2 V3.2" stroke="#8a8a8a" stroke-width="1.3"/><path d="M-2.6 -3.4 L1.6 0 L-2.6 3.4Z" fill="#8a8a8a"/></svg>
<div style="left:898.1px;top:408.2px;width:15.8px;height:16px;background:#035f7b;border-radius:5px 5px 0 0;"></div>
<span id="t98" class="t " style="left:903px;top:409.9px;color:#fff;font-weight:bold;font-size:11.5px;">1</span>
<span id="t99" class="t " style="left:919px;top:409.9px;color:#0b6482;font-size:11.2px;">2</span>
<span id="t100" class="t " style="left:934.8px;top:409.9px;color:#0b6482;font-size:11.2px;">3</span>
<span id="t101" class="t " style="left:950.4px;top:409.9px;color:#0b6482;font-size:11.2px;">4</span>
<span id="t102" class="t " style="left:966.2px;top:409.9px;color:#0b6482;font-size:11.2px;">5</span>
<div style="left:39px;top:422.8px;width:984px;height:4.8px;background:#f4f4f4;border-top:1px solid #d2d2d2;border-bottom:1px solid #cfcfcf;"></div>
<div style="left:521px;top:423.6px;width:19.8px;height:3.6px;background:#fff;border-left:1px solid #c8c8c8;border-right:1px solid #c8c8c8;"></div>
<svg style="position:absolute;left:527.4px;top:424.4px" width="7" height="3" viewBox="0 0 7 3"><path d="M0 3 L3.5 0 L7 3Z" fill="#444"/></svg>
<span id="t103" class="t " style="left:46px;top:435.5px;letter-spacing:-0.400px;color:#111;font-weight:bold;font-size:10.7px;">Please select a record</span>
<div style="left:38px;top:614.5px;width:985px;height:1px;background:#e8682c;"></div>
<div style="left:38px;top:614.5px;width:1px;height:24px;background:#e8682c;"></div>
<div style="left:300px;top:116px;width:72px;height:24.5px;border:1px solid #6a6a6a;background:#fff;"></div>
<span id="t104" class="t " style="left:308.5px;top:121.5px;letter-spacing:-0.211px;color:#555;font-size:12px;">Post Move</span>
<span id="t105" class="t " style="left:898.6px;top:3px;letter-spacing:-0.663px;color:#9cc7d2;font-size:9px;">Powered by FM:Systems</span>
<span id="t106" class="t " style="left:835px;top:20.8px;letter-spacing:-0.576px;color:#fff;font-size:11.2px;">Search</span>
<div style="left:869px;top:19px;width:151px;height:16.6px;border:1px solid #e8682c;border-radius:8.3px;background:#fff;"></div>
<div style="left:1003px;top:19px;width:16.8px;height:16.6px;border:1px solid #e8682c;border-radius:8.3px;background:#fff;"></div>
<svg style="position:absolute;left:1002.4px;top:18.3px" width="18" height="18" viewBox="-9 -9 18 18"><circle cx="-1.2" cy="-1" r="3.3" fill="none" stroke="#222" stroke-width="1.1"/><path d="M1.4 1.4 L4.6 4.5" stroke="#222" stroke-width="1.4" stroke-linecap="round"/></svg>
<div style="left:1003.2px;top:72.7px;width:16.6px;height:16.6px;border:1px solid #1c1c8a;border-radius:8.3px;background:#fff;"></div>
<svg style="position:absolute;left:1002.5px;top:72px" width="18" height="18" viewBox="-9 -9 18 18"><path d="M-3.7 -3.6 H3.9 V-2.7 L0.8 0.6 V4.4 L-0.6 3.6 V0.6 L-3.7 -2.7Z" fill="#3a3a3a"/></svg>
<div style="left:976.1px;top:91px;width:15.8px;height:15.8px;border:1px solid #1c1c8a;border-radius:8px;background:#fff;"></div>
<svg style="position:absolute;left:975px;top:89.9px" width="18" height="18" viewBox="-9 -9 18 18"><circle cx="-1.2" cy="-1" r="3.3" fill="none" stroke="#333" stroke-width="1.15"/><path d="M1.4 1.4 L4.6 4.5" stroke="#333" stroke-width="1.45" stroke-linecap="round"/></svg>
<svg style="position:absolute;left:1003px;top:91px" width="18" height="17" viewBox="1003 91 18 17"><rect x="1003.8" y="91.9" width="15.6" height="14.4" fill="#f8f8f8" stroke="#b4b4b4" stroke-width="1"/><rect x="1006.1" y="94.1" width="3.2" height="2.9" fill="#f21a1a"/><rect x="1009.85" y="94.1" width="3.2" height="2.9" fill="#f5a20a"/><rect x="1013.6" y="94.1" width="3.2" height="2.9" fill="#6fcc12"/><rect x="1006.1" y="97.55" width="3.2" height="2.9" fill="#10cc3a"/><rect x="1009.85" y="97.55" width="3.2" height="2.9" fill="#12c8c0"/><rect x="1013.6" y="97.55" width="3.2" height="2.9" fill="#109ae0"/><rect x="1006.1" y="101" width="3.2" height="2.9" fill="#1414f0"/><rect x="1009.85" y="101" width="3.2" height="2.9" fill="#9a14f0"/><rect x="1013.6" y="101" width="3.2" height="2.9" fill="#e810a0"/></svg>
</body>
</html>
